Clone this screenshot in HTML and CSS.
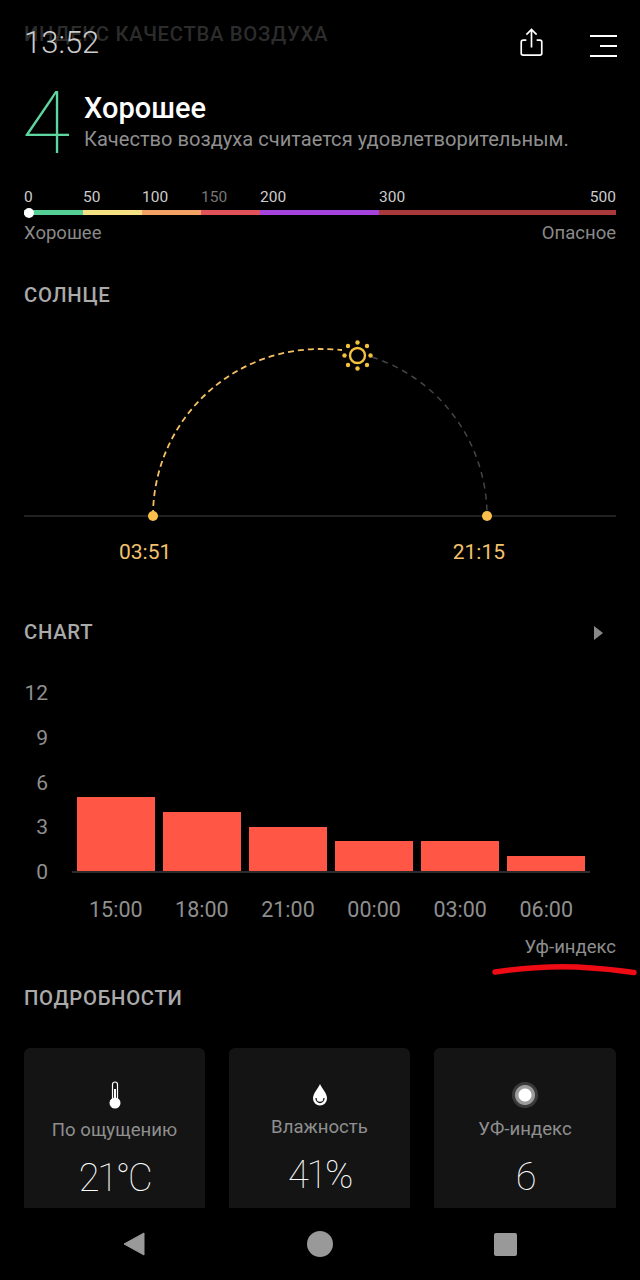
FILE: index.html
```html
<!DOCTYPE html>
<html lang="ru">
<head>
    <meta charset="UTF-8">
    <meta name="viewport" content="width=device-width, initial-scale=1.0">
    <title>Индекс качества воздуха</title>
    <link rel="stylesheet" href="styles.css">
</head>
<body>
<div class="screen">
    <main class="content">
        <h2 class="air-title">ИНДЕКС КАЧЕСТВА ВОЗДУХА</h2>

        <div class="air-summary">
            <div class="air-value">4</div>
            <div>
                <div class="air-name">Хорошее</div>
                <div class="air-text">Качество воздуха считается удовлетворительным.</div>
            </div>
        </div>

        <div class="scale">
            <div class="scale-part w1"><span>0</span><i class="green"></i></div>
            <div class="scale-part w1"><span>50</span><i class="yellow"></i></div>
            <div class="scale-part w1"><span>100</span><i class="orange"></i></div>
            <div class="scale-part w1"><span class="dim">150</span><i class="red"></i></div>
            <div class="scale-part w2"><span>200</span><i class="purple"></i></div>
            <div class="scale-part w4"><span class="ends"><b>300</b><b>500</b></span><i class="maroon"></i></div>
            <div class="scale-dot"></div>
        </div>
        <div class="scale-ends">
            <span>Хорошее</span>
            <span>Опасное</span>
        </div>

        <h2 class="section-title sun-title">СОЛНЦЕ</h2>
        <svg class="sun-arc" width="592" height="200" viewBox="0 0 592 200">
            <line x1="0" y1="186" x2="592" y2="186" stroke="#2b2b2b" stroke-width="1.5"/>
            <path d="M129 186 A167 167 0 0 1 296 19 Q306 19 318 20" fill="none" stroke="#f5c063" stroke-width="1.8" stroke-dasharray="6 4"/>
            <path d="M348 27 A167 167 0 0 1 463 186" fill="none" stroke="#444" stroke-width="1.5" stroke-dasharray="6 5"/>
            <circle cx="129" cy="186" r="5" fill="#fbbd4b"/>
            <circle cx="463" cy="186" r="5" fill="#fbbd4b"/>
            <!-- sun: ring and eight rays -->
            <circle cx="333.500" cy="25.500" r="7.500" fill="#000" stroke="#f4c13f" stroke-width="2.400"/>
            <g fill="#f4c13f">
                <circle cx="333.500" cy="12.500" r="2.200"/>
                <circle cx="333.500" cy="38.500" r="2.200"/>
                <circle cx="320.500" cy="25.500" r="2.200"/>
                <circle cx="346.500" cy="25.500" r="2.200"/>
                <circle cx="324" cy="16" r="2.200"/>
                <circle cx="343" cy="16" r="2.200"/>
                <circle cx="324" cy="35" r="2.200"/>
                <circle cx="343" cy="35" r="2.200"/>
            </g>
        </svg>
        <div class="sun-times">
            <span>03:51</span>
            <span>21:15</span>
        </div>

        <div class="chart-head">
            <h2 class="section-title">CHART</h2>
            <div class="chart-arrow"></div>
        </div>

        <div class="chart">
            <div class="y-axis">
                <span>12</span><span>9</span><span>6</span><span>3</span><span>0</span>
            </div>
            <div class="plot">
                <div class="bars">
                    <div class="bar" style="height: 74px"></div>
                    <div class="bar" style="height: 59px"></div>
                    <div class="bar" style="height: 44px"></div>
                    <div class="bar" style="height: 30px"></div>
                    <div class="bar" style="height: 30px"></div>
                    <div class="bar" style="height: 15px"></div>
                </div>
                <div class="x-axis">
                    <span>15:00</span><span>18:00</span><span>21:00</span><span>00:00</span><span>03:00</span><span>06:00</span>
                </div>
            </div>
        </div>
        <div class="chart-legend">Уф-индекс</div>

        <h2 class="section-title details-title">ПОДРОБНОСТИ</h2>
        <div class="cards">
            <div class="card">
                <svg class="card-icon" width="12" height="28" viewBox="0 0 12 28">
                    <rect x="3.500" y="1" width="5" height="18" rx="2.500" fill="none" stroke="#fff" stroke-width="1.200"/>
                    <rect x="5" y="8" width="2" height="12" fill="#fff"/>
                    <circle cx="6" cy="22" r="5.500" fill="#fff"/>
                </svg>
                <div class="card-label">По ощущению</div>
                <div class="card-value">21°C</div>
            </div>
            <div class="card">
                <svg class="card-icon drop" width="14" height="22" viewBox="0 0 14 22">
                    <path d="M7 0 C9 5 14 9 14 14.500 A7 7 0 0 1 0 14.500 C0 9 5 5 7 0Z" fill="#fff"/>
                    <path d="M3 14 A4 4.500 0 0 0 11 14" fill="none" stroke="#141414" stroke-width="1.300"/>
                </svg>
                <div class="card-label">Влажность</div>
                <div class="card-value">41%</div>
            </div>
            <div class="card">
                <div class="uv-icon"></div>
                <div class="card-label">УФ-индекс</div>
                <div class="card-value">6</div>
            </div>
        </div>
    </main>

    <!-- marker stroke under the legend -->
    <svg class="marker" width="146" height="14" viewBox="0 0 146 14">
        <path d="M3 10 C30 6 60 4 85 5 C105 6 125 8 142 10.500" fill="none" stroke="#ee0b14" stroke-width="5.500" stroke-linecap="round"/>
    </svg>

    <div class="status-time">13:52</div>
    <div class="top-actions">
        <svg class="share-icon" width="23" height="28" viewBox="0 0 24 30">
            <path d="M6.500 13 H3 A2 2 0 0 0 1 15 V27 A2 2 0 0 0 3 29 H21 A2 2 0 0 0 23 27 V15 A2 2 0 0 0 21 13 H17.500 M12 21 V1.500 M6.500 7 L12 1.500 L17.500 7" fill="none" stroke="#fff" stroke-width="1.800"/>
        </svg>
        <div class="menu-icon"><i></i><i class="short"></i><i></i></div>
    </div>

    <nav class="nav-bar">
        <svg width="22" height="24" viewBox="0 0 22 24"><path d="M21 1 V23 L1 12Z" fill="#999" stroke="#999" stroke-linejoin="round"/></svg>
        <div class="nav-circle"></div>
        <div class="nav-square"></div>
    </nav>
</div>
</body>
</html>
```

FILE: styles.css
```css
* {
    box-sizing: border-box;
}
html, body {
    margin: 0;
    padding: 0;
    background: #000;
}
body {
    font-family: Roboto, "Noto Sans", sans-serif;
    color: #999;
}
.screen {
    position: relative;
    width: 640px;
    height: 1280px;
    overflow: hidden;
    background: #000;
}
.content {
    padding: 24px 24px 0;
}
h2 {
    margin: 0;
    font-size: 20.300px;
    line-height: 21px;
    font-weight: 500;
    letter-spacing: 0.7px;
}

/* air quality block */
.air-title {
    color: #2c2c2c;
}
.air-summary {
    display: flex;
    margin-top: 36px;
    height: 90px;
}
.air-value {
    width: 60px;
    font-size: 88px;
    line-height: 84px;
    font-weight: 100;
    color: #5fd6a0;
    margin-left: -2px;
    margin-right: 2px;
}
.air-name {
    margin-top: 12px;
    font-size: 29px;
    line-height: 30px;
    font-weight: 500;
    color: #fff;
}
.air-text {
    margin-top: 4px;
    font-size: 20.100px;
    line-height: 24px;
    color: #8f8f8f;
}
.scale {
    position: relative;
    display: flex;
    margin-top: 18px;
}
.scale-part span {
    display: block;
    font-size: 15.500px;
    line-height: 17px;
    color: #ccc;
}
.scale-part span.dim {
    color: #777;
}
.scale-part b {
    font-weight: 400;
}
.scale-part .ends {
    display: flex;
    justify-content: space-between;
}
.scale-part i {
    display: block;
    height: 5px;
    margin-top: 4px;
}
.w1 { width: 59px; }
.w2 { width: 119px; }
.w4 { width: 237px; }
.green { background: #55cf95; }
.yellow { background: #f5e084; }
.orange { background: #f3a165; }
.red { background: #e2525a; }
.purple { background: #a544dd; }
.maroon { background: #a83a3c; }
.scale-dot {
    position: absolute;
    left: 0;
    bottom: -3px;
    width: 10px;
    height: 10px;
    border-radius: 50%;
    background: #fff;
}
.scale-ends {
    display: flex;
    justify-content: space-between;
    margin-top: 6px;
    font-size: 18.500px;
    line-height: 24px;
    color: #8a8a8a;
}

/* sunrise and sunset */
.section-title {
    color: #aaa;
}
.sun-title {
    margin-top: 40px;
}
.sun-arc {
    display: block;
    margin-top: 24px;
}
.sun-times {
    display: flex;
    justify-content: space-between;
    padding: 0 111px 0 95px;
    margin-top: 10px;
    font-size: 21px;
    line-height: 24px;
    color: #f3c26c;
}

/* uv chart */
.chart-head {
    display: flex;
    justify-content: space-between;
    align-items: center;
    margin-top: 58px;
    padding-right: 13px;
}
.chart-arrow {
    width: 0;
    height: 0;
    border-left: 9px solid #888;
    border-top: 7px solid transparent;
    border-bottom: 7px solid transparent;
}
.chart {
    display: flex;
    margin-top: 38px;
}
.y-axis {
    width: 24px;
    flex: none;
    display: flex;
    flex-direction: column;
    gap: 20.800px;
    font-size: 21px;
    line-height: 24px;
    text-align: right;
    color: #8f8f8f;
}
.plot {
    width: 518px;
    margin-left: 24px;
    padding-top: 23px;
}
.bars {
    display: grid;
    grid-template-columns: repeat(6, 77.600px);
    column-gap: 8.500px;
    align-items: end;
    height: 169px;
    padding: 0 5px;
    border-bottom: 2px solid #2c2c2c;
}
.bar {
    background: #ff5645;
}
.x-axis {
    display: grid;
    grid-template-columns: repeat(6, 77.600px);
    column-gap: 8.500px;
    padding: 0 5px;
    margin-top: 24px;
    font-size: 21.500px;
    line-height: 26px;
    text-align: center;
    color: #8f8f8f;
}
.chart-legend {
    margin-top: 13px;
    text-align: right;
    font-size: 18.500px;
    line-height: 22px;
    color: #8f8f8f;
}
.marker {
    position: absolute;
    left: 492px;
    top: 962px;
}

/* details */
.details-title {
    margin-top: 30px;
}
.cards {
    display: grid;
    grid-template-columns: 181px 181px 182px;
    column-gap: 24px;
    margin-top: 39px;
}
.card {
    height: 200px;
    padding-top: 33px;
    display: flex;
    flex-direction: column;
    align-items: center;
    background: #141414;
    border-radius: 6px;
}
.card-icon {
    display: block;
    height: 28px;
}
.card-icon.drop {
    height: 22px;
    margin-top: 3px;
}
.uv-icon {
    width: 26px;
    height: 26px;
    margin-top: 1px;
    border-radius: 50%;
    background: radial-gradient(circle, #fff 0 6px, #9c9c9c 7px 9.500px, #3a3a3a 10.500px 13px);
}
.card-label {
    margin-top: 9px;
    font-size: 18.600px;
    line-height: 24px;
    color: #8f8f8f;
}
.card-value {
    margin-top: 14px;
    font-size: 38px;
    line-height: 44px;
    font-weight: 100;
    letter-spacing: -2.300px;
    color: #fff;
}

/* status bar overlay */
.status-time {
    position: absolute;
    left: 24px;
    top: 25px;
    font-size: 31px;
    line-height: 36px;
    font-weight: 300;
    color: #ccc;
}
.top-actions {
    position: absolute;
    top: 27px;
    right: 23px;
    display: flex;
    align-items: flex-start;
    gap: 47px;
}
.share-icon {
    display: block;
    margin-top: 1px;
}
.menu-icon {
    width: 27px;
}
.menu-icon i {
    display: block;
    height: 2px;
    margin: 8px 0;
    background: #fff;
}
.menu-icon i.short {
    margin-left: 10px;
}

/* android navigation */
.nav-bar {
    position: absolute;
    left: 0;
    right: 0;
    bottom: 0;
    height: 72px;
    display: flex;
    align-items: center;
    padding: 0 123px;
    justify-content: space-between;
    background: #000;
}
.nav-circle {
    width: 26px;
    height: 26px;
    border-radius: 50%;
    background: #999;
}
.nav-square {
    width: 23px;
    height: 23px;
    border-radius: 2px;
    background: #999;
}
```
